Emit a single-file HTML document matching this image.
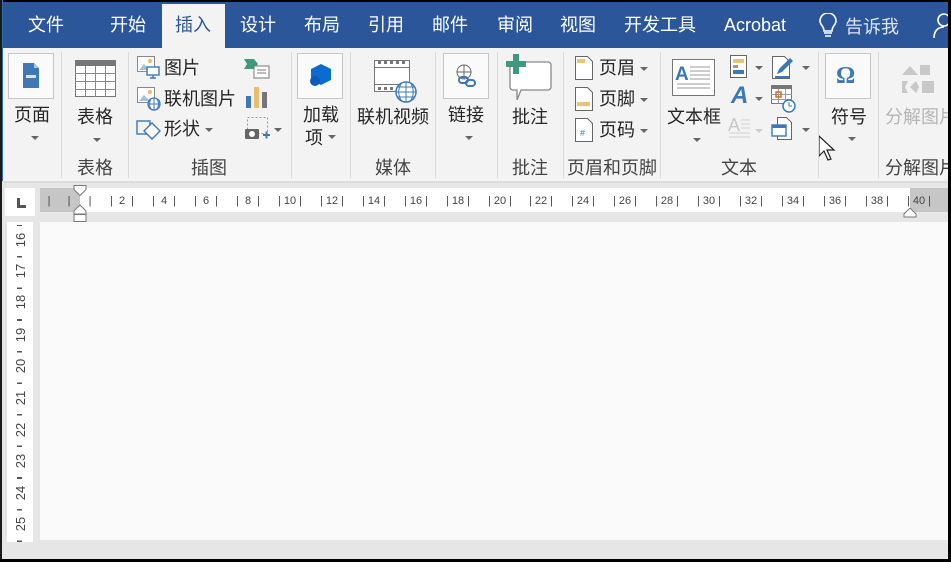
<!DOCTYPE html>
<html><head><meta charset="utf-8"><style>
*{margin:0;padding:0;box-sizing:border-box}
body{width:951px;height:562px;overflow:hidden;background:#000;position:relative;font-family:"Liberation Sans","Noto Sans CJK SC",sans-serif}
.a{position:absolute}
.t{position:absolute;top:14px;color:#fff;font-size:18px;line-height:22px}
.r{position:absolute;color:#262626;font-size:18px;line-height:22px;white-space:nowrap}
.g{position:absolute;color:#444;font-size:18px;line-height:22px;top:157px;white-space:nowrap}
.sep{position:absolute;top:52px;width:1px;height:126px;background:#dadada}
.dd{position:absolute;width:0;height:0;border-left:4px solid transparent;border-right:4px solid transparent;border-top:4px solid #666}
.hn{position:absolute;top:194px;font-size:11px;color:#444;line-height:14px;transform:translateX(-50%);white-space:pre}
.vn{position:absolute;left:10px;font-size:13px;color:#444;line-height:14px;transform:rotate(-90deg);transform-origin:center;width:22px;text-align:center}
</style></head><body>
<div class="a" style="left:2px;top:2px;width:946px;height:557px;background:#f3f3f3"></div>
<div class="a" style="left:2px;top:2px;width:946px;height:46px;background:#2b579a"></div>
<div class="a" style="left:0;top:0;width:2px;height:562px;background:#1a1a1a"></div>
<div class="a" style="left:2px;top:0;width:1px;height:562px;background:#2b6fb0"></div>
<!-- tabs -->
<div class="a" style="left:162px;top:4px;width:63px;height:44px;background:#f3f3f3"></div>
<div class="t" style="left:28px">文件</div>
<div class="t" style="left:110px">开始</div>
<div class="t" style="left:175px;color:#2b579a">插入</div>
<div class="t" style="left:240px">设计</div>
<div class="t" style="left:304px">布局</div>
<div class="t" style="left:368px">引用</div>
<div class="t" style="left:432px">邮件</div>
<div class="t" style="left:497px">审阅</div>
<div class="t" style="left:560px">视图</div>
<div class="t" style="left:624px">开发工具</div>
<div class="t" style="left:724px;font-size:18px">Acrobat</div>
<svg class="a" style="left:818px;top:13px" width="20" height="26" viewBox="0 0 20 26"><path d="M6 18 C6 13 2 12 2 8 A8 8 0 0 1 18 8 C18 12 14 13 14 18 Z M6 20h8 M7 23h6" fill="none" stroke="#fff" stroke-width="1.6"/></svg>
<div class="t" style="left:845px;color:#dde4ee;top:16px">告诉我</div>
<svg class="a" style="left:932px;top:12px" width="16" height="26"><circle cx="12" cy="8" r="6" fill="none" stroke="#fff" stroke-width="1.6"/><path d="M2 26 C2 17 8 15 12 15" fill="none" stroke="#fff" stroke-width="1.6"/></svg>
<!-- ribbon -->
<div class="a" style="left:2px;top:181px;width:946px;height:2px;background:#dcdcdc"></div>
<!-- 页面 -->
<div class="a" style="left:8px;top:53px;width:46px;height:46px;border:1px solid #c6c6c6;background:#fafafa"></div>
<svg class="a" style="left:23px;top:63px" width="16" height="25"><path d="M0 0h11l5 5v20h-16z" fill="#3f77b7"/><path d="M11 0v5h5" fill="#a8c4e4"/><rect x="3" y="12" width="10" height="3" fill="#fff" opacity=".8"/></svg>
<div class="r" style="left:14px;top:104px">页面</div><div class="dd" style="left:31px;top:136px"></div>
<div class="sep" style="left:61px"></div>
<!-- 表格 -->
<svg class="a" style="left:75px;top:60px" width="41" height="37"><rect x=".5" y=".5" width="40" height="36" fill="#fff" stroke="#777"/><rect x="0" y="0" width="41" height="6" fill="#777"/><path d="M0 13.5h41M0 21.5h41M0 29.5h41M10.5 6v31M20.5 6v31M30.5 6v31" stroke="#888"/></svg>
<div class="r" style="left:77px;top:106px">表格</div><div class="dd" style="left:93px;top:138px"></div>
<div class="g" style="left:77px">表格</div>
<div class="sep" style="left:128px"></div>
<!-- 插图 -->
<svg class="a" style="left:137px;top:56px" width="24" height="24"><rect x=".5" y=".5" width="17" height="15" fill="#fff" stroke="#888"/><path d="M2 14l5-6 6 6z" fill="#a6c1da"/><circle cx="13" cy="5" r="2" fill="#f0b860"/><rect x="10" y="11" width="12" height="8" fill="#fff" stroke="#3c78b5" stroke-width="1.4"/><path d="M16 19v3M13 22h6" stroke="#3c78b5" stroke-width="1.4"/></svg>
<div class="r" style="left:164px;top:57px">图片</div>
<svg class="a" style="left:137px;top:87px" width="24" height="24"><rect x=".5" y=".5" width="17" height="15" fill="#fff" stroke="#888"/><path d="M2 14l5-6 6 6z" fill="#a6c1da"/><circle cx="13" cy="5" r="2" fill="#f0b860"/><circle cx="17" cy="17" r="6" fill="#fff" stroke="#3c78b5" stroke-width="1.3"/><path d="M11 17h12M17 11v12M14 12c-2 3-2 7 0 10M20 12c2 3 2 7 0 10" fill="none" stroke="#3c78b5"/></svg>
<div class="r" style="left:164px;top:88px">联机图片</div>
<svg class="a" style="left:136px;top:116px" width="26" height="26"><rect x="1" y="5" width="13" height="13" fill="none" stroke="#3c78b5" stroke-width="1.4"/><path d="M16 2l8 8-8 8-8-8z" fill="#fff" stroke="#3c78b5" stroke-width="1.4" transform="translate(0,5)"/></svg>
<div class="r" style="left:164px;top:118px">形状</div><div class="dd" style="left:205px;top:128px"></div>
<svg class="a" style="left:244px;top:58px" width="26" height="22"><path d="M0 1h10l4 5-4 5h-10l3-5z" fill="#3f9a7d"/><rect x="10" y="8" width="15" height="12" fill="#fff" stroke="#777"/><path d="M13 12h9M13 15h9" stroke="#777"/></svg>
<svg class="a" style="left:246px;top:86px" width="22" height="22"><rect x="0" y="10" width="5" height="12" fill="#3f77b7"/><rect x="8" y="1" width="5" height="21" fill="#e8bd6e"/><rect x="16" y="6" width="5" height="16" fill="#777"/></svg>
<svg class="a" style="left:245px;top:116px" width="26" height="26"><rect x="2.5" y="1.5" width="20" height="16" fill="none" stroke="#999" stroke-dasharray="2 2"/><rect x="0" y="13" width="14" height="10" rx="1" fill="#666"/><circle cx="7" cy="18" r="3" fill="#fff"/><path d="M18 19h7M21.5 15.5v7" stroke="#3f77b7" stroke-width="2"/></svg>
<div class="dd" style="left:274px;top:128px"></div>
<div class="g" style="left:191px">插图</div>
<div class="sep" style="left:291px"></div>
<!-- 加载项 -->
<div class="a" style="left:297px;top:53px;width:46px;height:46px;border:1px solid #c6c6c6;background:#fafafa"></div>
<svg class="a" style="left:310px;top:64px" width="22" height="24"><path d="M11 0l10 5v11l-10 5-10-5v-11z" fill="#0a6cd0"/><circle cx="5" cy="17" r="5" fill="#0a5cb8"/></svg>
<div class="r" style="left:303px;top:104px">加载</div>
<div class="r" style="left:305px;top:127px">项</div><div class="dd" style="left:328px;top:135px"></div>
<div class="sep" style="left:350px"></div>
<!-- 联机视频 -->
<svg class="a" style="left:374px;top:60px" width="44" height="44"><rect x=".5" y=".5" width="35" height="31" fill="#fff" stroke="#777"/><path d="M0 7.5h36M0 24.5h36" stroke="#777"/><path d="M4 2.5h3M10 2.5h3M16 2.5h3M22 2.5h3M28 2.5h3M4 28.5h3M10 28.5h3M16 28.5h3" stroke="#777" stroke-width="3"/><circle cx="32" cy="32" r="10" fill="#fff" stroke="#3c78b5" stroke-width="1.5"/><path d="M22 32h20M32 22v20M27 24c-3 5-3 11 0 16M37 24c3 5 3 11 0 16M24 27h16M24 37h16" fill="none" stroke="#3c78b5"/></svg>
<div class="r" style="left:357px;top:106px">联机视频</div>
<div class="g" style="left:375px">媒体</div>
<div class="sep" style="left:435px"></div>
<!-- 链接 -->
<div class="a" style="left:443px;top:53px;width:46px;height:46px;border:1px solid #c6c6c6;background:#fafafa"></div>
<svg class="a" style="left:455px;top:64px" width="22" height="24"><circle cx="9" cy="8" r="7" fill="#fff" stroke="#666"/><path d="M2 8h14M9 1v14" stroke="#666"/><rect x="4" y="13" width="9" height="6" rx="3" fill="none" stroke="#3c78b5" stroke-width="2"/><rect x="11" y="16" width="9" height="6" rx="3" fill="none" stroke="#3c78b5" stroke-width="2"/></svg>
<div class="r" style="left:448px;top:104px">链接</div><div class="dd" style="left:465px;top:136px"></div>
<div class="sep" style="left:497px"></div>
<!-- 批注 -->
<svg class="a" style="left:505px;top:54px" width="48" height="46"><path d="M8 8h35a3 3 0 0 1 3 3v22a3 3 0 0 1-3 3h-27l-4 10v-10h-4a3 3 0 0 1-3-3v-22a3 3 0 0 1 3-3z" fill="#fff" stroke="#888" stroke-width="1.3"/><path d="M11 0v20M1 10h20" stroke="#3f9a7d" stroke-width="6"/></svg>
<div class="r" style="left:512px;top:106px">批注</div>
<div class="g" style="left:512px">批注</div>
<div class="sep" style="left:563px"></div>
<!-- 页眉页脚 -->
<svg class="a" style="left:575px;top:56px" width="18" height="24"><path d="M.5 .5h12l5 5v18h-17z" fill="#fff" stroke="#666"/><rect x="2" y="3" width="8" height="4" fill="#f0c07a"/></svg>
<div class="r" style="left:599px;top:57px">页眉</div><div class="dd" style="left:640px;top:67px"></div>
<svg class="a" style="left:575px;top:87px" width="18" height="24"><path d="M.5 .5h12l5 5v18h-17z" fill="#fff" stroke="#666"/><rect x="2" y="15" width="13" height="4" fill="#f0c07a"/></svg>
<div class="r" style="left:599px;top:88px">页脚</div><div class="dd" style="left:640px;top:98px"></div>
<svg class="a" style="left:575px;top:118px" width="18" height="24"><path d="M.5 .5h12l5 5v18h-17z" fill="#fff" stroke="#666"/><text x="5" y="18" font-size="9" fill="#3c78b5" font-family="Liberation Sans">#</text></svg>
<div class="r" style="left:599px;top:119px">页码</div><div class="dd" style="left:640px;top:129px"></div>
<div class="g" style="left:567px">页眉和页脚</div>
<div class="sep" style="left:660px"></div>
<!-- 文本 -->
<svg class="a" style="left:672px;top:59px" width="44" height="38"><rect x=".5" y=".5" width="42" height="36" fill="#fff" stroke="#777"/><text x="3" y="21" font-size="19" font-weight="bold" fill="#3c78b5" font-family="Liberation Sans">A</text><path d="M18 8h20M18 12h20M18 16h20M18 20h20M5 25h33M5 29h33" stroke="#999"/></svg>
<div class="r" style="left:667px;top:106px">文本框</div><div class="dd" style="left:693px;top:138px"></div>
<svg class="a" style="left:730px;top:55px" width="18" height="24"><rect x=".5" y=".5" width="16" height="22" fill="#fff" stroke="#666"/><rect x="3" y="4" width="11" height="4" fill="#f0c07a"/><rect x="3" y="10" width="5" height="3" fill="#999"/><rect x="3" y="15" width="11" height="4" fill="#3f77b7"/></svg>
<div class="dd" style="left:755px;top:66px"></div>
<div class="a" style="left:731px;top:82px;color:#3c78b5;font-size:24px;font-style:italic;font-weight:bold;line-height:28px">A</div>
<div class="dd" style="left:755px;top:97px"></div>
<div class="a" style="left:728px;top:115px;color:#c8c8c8;font-size:18px;line-height:20px">A</div>
<svg class="a" style="left:729px;top:117px" width="22" height="24"><path d="M12 3h9M12 7h9M12 11h9M0 16h21M0 20h21" stroke="#d0d0d0"/></svg>
<div class="dd" style="left:755px;top:129px;border-top-color:#ccc"></div>
<svg class="a" style="left:772px;top:56px" width="24" height="24"><path d="M.5 .5h12l5 5v17h-17z" fill="#fff" stroke="#666"/><path d="M5 18l2-5 11-11 3 3-11 11z" fill="#3c78b5"/><path d="M3 21h14" stroke="#3c78b5" stroke-width="2"/></svg>
<div class="dd" style="left:802px;top:66px"></div>
<svg class="a" style="left:771px;top:85px" width="26" height="28"><rect x=".5" y=".5" width="20" height="18" fill="#fff" stroke="#777"/><rect x="0" y="0" width="21" height="4" fill="#777"/><path d="M0 9.5h21M0 14.5h21M7.5 4v15M14.5 4v15" stroke="#999"/><rect x="5" y="7" width="5" height="5" fill="none" stroke="#d56a1e" stroke-width="1.5"/><circle cx="18" cy="21" r="6" fill="#fff" stroke="#3c78b5" stroke-width="1.5"/><path d="M18 17v4h3" stroke="#3c78b5" fill="none"/></svg>
<svg class="a" style="left:771px;top:117px" width="24" height="24"><path d="M6.5 .5h9l5 5v17h-14z" fill="#fff" stroke="#666"/><rect x="1" y="8" width="14" height="11" fill="#fff" stroke="#3c78b5" stroke-width="1.4"/><rect x="1" y="8" width="14" height="3" fill="#3c78b5"/></svg>
<div class="dd" style="left:802px;top:128px"></div>
<div class="g" style="left:721px">文本</div>
<svg class="a" style="left:818px;top:135px" width="20" height="28"><path d="M1 1v20l5-5 4 9 3-1-4-9h7z" fill="#fff" stroke="#222" stroke-width="1.2"/></svg>
<div class="sep" style="left:818px"></div>
<!-- 符号 -->
<div class="a" style="left:825px;top:53px;width:46px;height:46px;border:1px solid #c6c6c6;background:#fafafa"></div>
<div class="a" style="left:836px;top:61px;color:#3c78b5;font-size:24px;font-weight:bold;font-family:'Liberation Serif',serif;line-height:30px">Ω</div>
<div class="r" style="left:831px;top:106px">符号</div><div class="dd" style="left:848px;top:137px"></div>
<div class="sep" style="left:878px"></div>
<svg class="a" style="left:902px;top:61px" width="36" height="34"><path d="M0 14l8-9 8 9z M18 4h10v10h-10z" fill="#c8c8c8"/><path d="M0 20h6l-3 6 3 6h-6zM8 26l6-6 3 6-3 6zM20 20h12v12h-12z" fill="#c8c8c8"/></svg>
<div class="r" style="left:885px;top:106px;color:#b5b5b5">分解图片</div>
<div class="g" style="left:885px">分解图片</div>
<!-- ruler area -->
<div class="a" style="left:2px;top:183px;width:946px;height:376px;background:#e6e6e6"></div>
<div class="a" style="left:5px;top:188px;width:30px;height:28px;background:#fff"></div>
<div class="a" style="left:17px;top:198px;width:3px;height:10px;background:#555"></div>
<div class="a" style="left:17px;top:205px;width:9px;height:3px;background:#555"></div>
<div class="a" style="left:40px;top:188px;width:908px;height:24px;background:#fff"></div>
<div class="a" style="left:40px;top:188px;width:40px;height:24px;background:#c6c6c6"></div>
<div class="a" style="left:910px;top:188px;width:38px;height:24px;background:#c6c6c6"></div>
<svg class="a" style="left:73px;top:185px" width="14" height="38"><path d="M1 .5h12v4l-6 6-6-6z" fill="#fff" stroke="#777"/><path d="M1 26l6-6 6 6v3h-12z M1 29.5h12v7h-12z" fill="#fff" stroke="#777"/></svg>
<svg class="a" style="left:903px;top:208px" width="14" height="10"><path d="M1 9v-3l6-6 6 6v3z" fill="#fff" stroke="#777"/></svg>
<div class="hn" style="left:49px">|</div><div class="hn" style="left:69px">|</div><div class="hn" style="left:90px">|</div>
<div class="hn" style="left:122px">|  2  |</div><div class="hn" style="left:164px">|  4  |</div><div class="hn" style="left:206px">|  6  |</div><div class="hn" style="left:248px">|  8  |</div><div class="hn" style="left:290px">| 10 |</div><div class="hn" style="left:332px">| 12 |</div><div class="hn" style="left:374px">| 14 |</div><div class="hn" style="left:416px">| 16 |</div><div class="hn" style="left:458px">| 18 |</div><div class="hn" style="left:500px">| 20 |</div><div class="hn" style="left:541px">| 22 |</div><div class="hn" style="left:583px">| 24 |</div><div class="hn" style="left:625px">| 26 |</div><div class="hn" style="left:667px">| 28 |</div><div class="hn" style="left:709px">| 30 |</div><div class="hn" style="left:751px">| 32 |</div><div class="hn" style="left:793px">| 34 |</div><div class="hn" style="left:835px">| 36 |</div><div class="hn" style="left:877px">| 38 |</div><div class="hn" style="left:919px">| 40 |</div>
<!-- vertical ruler -->
<div class="a" style="left:7px;top:222px;width:26px;height:320px;background:#fff"></div>
<div class="vn" style="top:233px">16</div><div class="vn" style="top:264px">17</div><div class="vn" style="top:295px">18</div><div class="vn" style="top:328px">19</div><div class="vn" style="top:359px">20</div><div class="vn" style="top:391px">21</div><div class="vn" style="top:423px">22</div><div class="vn" style="top:454px">23</div><div class="vn" style="top:486px">24</div><div class="vn" style="top:517px">25</div>
<div class="a" style="left:17px;top:225px;width:5px;height:320px;background:repeating-linear-gradient(to bottom,#555 0 1px,transparent 1px 31.6px)"></div>
<div class="a" style="left:17px;top:256px;width:5px;height:290px;background:repeating-linear-gradient(to bottom,#555 0 1px,transparent 1px 31.6px)"></div>
<!-- document -->
<div class="a" style="left:40px;top:222px;width:908px;height:318px;background:#fafafa"></div>
<div class="a" style="left:948px;top:0;width:3px;height:562px;background:#000"></div>
<div class="a" style="left:0;top:559px;width:951px;height:3px;background:#000"></div>
</body></html>
